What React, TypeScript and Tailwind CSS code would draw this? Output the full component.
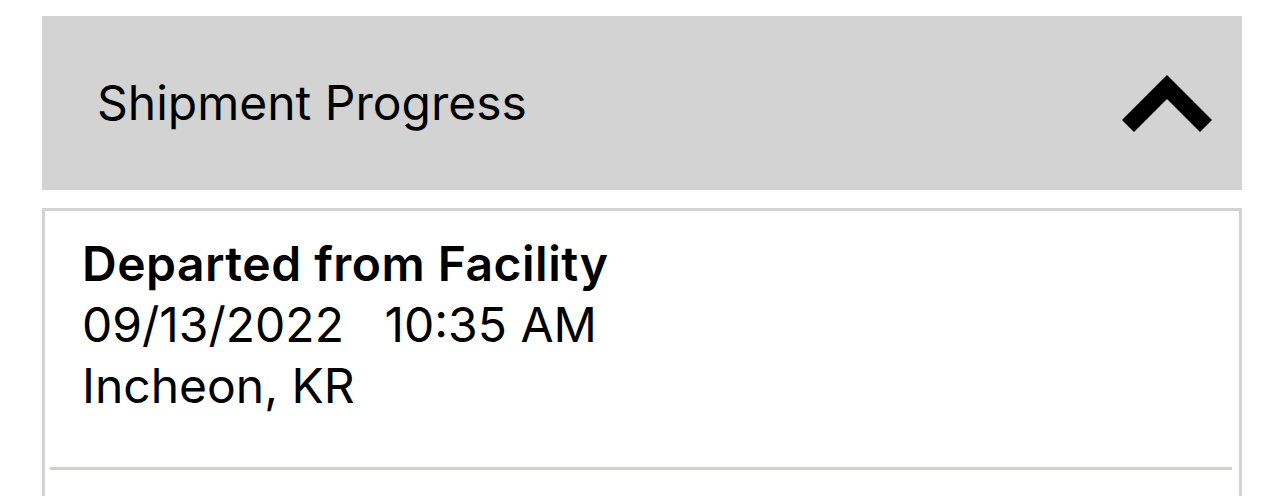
export default function App() {
  return (
    <div
      className="min-h-screen bg-white px-[42px] pt-4 text-black"
      style={{ fontFamily: 'Inter, "Noto Sans", sans-serif' }}
    >
      {/* Header */}
      <div className="flex h-[174px] items-center justify-between bg-[#d3d3d3] pl-[55px] pr-[30px]">
        <span className="text-[48px] font-normal">Shipment Progress</span>
        <svg width="90" height="57" viewBox="0 0 90 57" fill="none" aria-label="Collapse">
          <path d="M6 51 L45 12 L84 51" stroke="black" strokeWidth="17" strokeLinejoin="miter" strokeLinecap="butt" />
        </svg>
      </div>

      {/* Event card */}
      <div className="mt-[18px] h-[400px] border-[3px] border-[#d3d3d3]">
        <div className="px-[37px] pt-[22px] pb-[51px] text-[48px] leading-[61px]">
          <div className="font-semibold tracking-[0.01em]">Departed from Facility</div>
          <div className="whitespace-pre">09/13/2022   10:35 AM</div>
          <div>Incheon, KR</div>
        </div>
        <div className="ml-[5px] mr-[7px] h-[3px] bg-[#d3cfc9]" />
      </div>
    </div>
  )
}
